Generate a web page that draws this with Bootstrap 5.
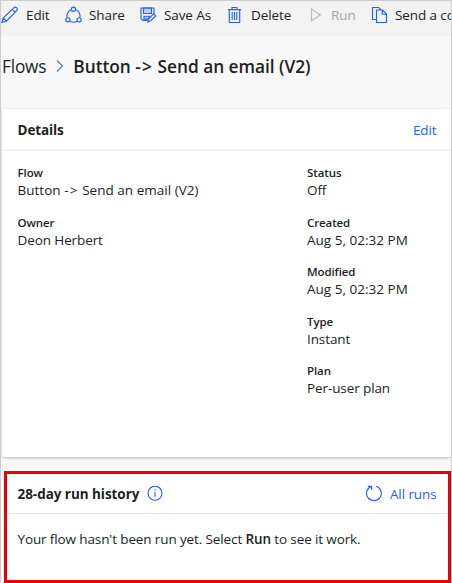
<!DOCTYPE html>
<html lang="en">
<head>
<meta charset="utf-8">
<meta name="viewport" content="width=device-width, initial-scale=1">
<title>Flow details</title>
<link href="https://cdn.jsdelivr.net/npm/bootstrap@5.3.0/dist/css/bootstrap.min.css" rel="stylesheet">
<style>
  body { font-family: "Open Sans", "Noto Sans", sans-serif; font-size: 13.5px; line-height: 18px; color: #201f1e; background: #f8f8f8; letter-spacing: -.1px; }
  .page { height: 583px; border: 1px solid #ccc; border-bottom: 0; }
  svg { fill: none; stroke: #2563eb; stroke-width: 1.15; flex: none; display: block; }
  .toolbar { height: 35px; background: #f3f3f3; padding-bottom: 7px; }
  .cmd { flex: none; color: #201f1e; }
  .cmd span { margin-left: 7px; }
  .cmd.off { color: #a6a4a2; }
  .cmd.off svg { stroke: #bdbbb9; }
  .w-edit { width: 64px; }
  .w-share { width: 75px; }
  .w-save { width: 86px; }
  .w-delete { width: 82px; }
  .w-delete span { margin-left: 8px; }
  .w-run { width: 63px; }
  .crumbs { height: 73px; font-size: 17.3px; line-height: 24px; padding: 19px 0 0 1px; letter-spacing: -.2px; }
  .crumbs svg { stroke: #5b8196; margin: 0 7.5px; }
  .crumb-now { letter-spacing: -.02px; }
  .arrow { letter-spacing: 1.2px; }
  .panel { background: #fff; margin-left: 1px; border-radius: 2px; box-shadow: 0 1px 3px rgba(0,0,0,.25); }
  .details { height: 348px; }
  .panel-head { height: 42px; padding: 1px 14.5px 0 15.5px; border-bottom: 2px solid #f3f2f1; }
  .strong { font-weight: 700; }
  .act { color: #1f5ff0; text-decoration: none; }
  .field-grid { padding: 13px 0 0 15.5px; }
  .left-col { width: 289.5px; }
  .field { height: 49.5px; }
  .field dt { font-size: 11.5px; font-weight: 600; line-height: 17px; }
  .field dd { line-height: 18px; margin: 0; }
  .wide { letter-spacing: .02px; }
  .history { margin: 14px 0 0 3px; height: 112px; border: 3px solid #e8000b; background: #fff; }
  .history .panel-head { height: 40px; padding: 1px 11.5px 0 10.5px; border-bottom: 1px solid #e3e3e3; }
  .history .strong { letter-spacing: -.05px; }
  .note { padding: 16px 0 0 10.5px; letter-spacing: -.12px; }
</style>
</head>
<body>
<div class="page overflow-hidden">
  <nav class="toolbar d-flex align-items-center overflow-hidden text-nowrap">
    <a class="cmd w-edit d-flex align-items-center text-decoration-none" href="#"><svg width="18" height="18" viewBox="0 0 18 18"><path d="M1 16.5 2.2 12 12.8 1.8a2 2 0 0 1 2.9 2.9L5.3 15.2Z M11.3 3.3l3 3 M2.2 12l3.1 3.2"/></svg><span>Edit</span></a>
    <a class="cmd w-share d-flex align-items-center text-decoration-none" href="#"><svg width="17" height="18" viewBox="0 0 17 18"><circle cx="8.5" cy="3.2" r="2.1"/><circle cx="2.9" cy="13.8" r="2.1"/><circle cx="14.1" cy="13.8" r="2.1"/><path d="M6.3 3.8A6.5 6.5 0 0 0 2.1 11.7M10.7 3.8a6.5 6.5 0 0 1 4.2 7.9M5 15.2a7 7 0 0 0 7 0"/></svg><span>Share</span></a>
    <a class="cmd w-save d-flex align-items-center text-decoration-none" href="#"><svg width="17" height="18" viewBox="0 0 17 18"><path fill="#b9d2fb" d="M3.5 2v5.5h8V2ZM4 14v-3.8h5.5L7.5 14Z"/><path d="M7 14.5H3L1 12.6V2h13v6M6 14v-2"/><path fill="#f3f3f3" d="M7.8 15.8l.7-2.8 5.2-5.1 2 2-5.2 5.1Z"/></svg><span>Save As</span></a>
    <a class="cmd w-delete d-flex align-items-center text-decoration-none" href="#"><svg width="17" height="18" viewBox="0 0 17 18"><path d="M2 3.6h13M6 3.6V1.5h5v2.1M3.3 3.6v12.9h10.4V3.6M6.2 6v8M8.5 6v8M10.8 6v8"/></svg><span>Delete</span></a>
    <a class="cmd off w-run d-flex align-items-center text-decoration-none" href="#"><svg width="16" height="16" viewBox="0 0 16 16"><path d="M3.5 2v11.8L12.5 8Z"/></svg><span>Run</span></a>
    <a class="cmd d-flex align-items-center text-decoration-none" href="#"><svg width="17" height="18" viewBox="0 0 17 18"><path d="M5.5 13.5H1.5V1.5h6.2l2.3 2.3M5.5 4h6l4 4v8.5h-10ZM11.3 4v4.2h4.2"/></svg><span>Send a copy</span></a>
  </nav>
  <div class="crumbs d-flex text-nowrap">
    <span>Flows</span>
    <svg width="12" height="22" viewBox="0 0 12 22"><path d="M3 5.5 8.5 11 3 16.5"/></svg>
    <span class="fw-semibold crumb-now">Button <span class="arrow">-&gt;</span> Send an email (V2)</span>
  </div>
  <section class="panel details">
    <header class="panel-head d-flex justify-content-between align-items-center"><span class="strong">Details</span><a class="act" href="#">Edit</a></header>
    <div class="d-flex field-grid">
      <dl class="m-0 left-col">
        <div class="field"><dt>Flow</dt><dd class="wide">Button <span class="arrow">-&gt;</span> Send an email (V2)</dd></div>
        <div class="field"><dt>Owner</dt><dd>Deon Herbert</dd></div>
      </dl>
      <dl class="m-0">
        <div class="field"><dt>Status</dt><dd>Off</dd></div>
        <div class="field"><dt>Created</dt><dd class="wide">Aug 5, 02:32 PM</dd></div>
        <div class="field"><dt>Modified</dt><dd class="wide">Aug 5, 02:32 PM</dd></div>
        <div class="field"><dt>Type</dt><dd>Instant</dd></div>
        <div class="field"><dt>Plan</dt><dd>Per-user plan</dd></div>
      </dl>
    </div>
  </section>
  <section class="history">
    <header class="panel-head d-flex justify-content-between align-items-center">
      <span class="d-flex align-items-center strong">28-day run history<svg class="ms-2" width="16" height="16" viewBox="0 0 16 16"><circle cx="8" cy="7.2" r="7"/><path d="M8 6v4.7M8 3.5v1.2"/></svg></span>
      <a class="act d-flex align-items-center" href="#"><svg class="me-2" width="17" height="18" viewBox="0 0 17 18"><path d="M2.8 1.3H6.6V5.1M6.6 1.3A7.4 7.4 0 1 0 11.3 1.3"/></svg>All runs</a>
    </header>
    <p class="m-0 note">Your flow hasn't been run yet. Select <b class="fw-semibold">Run</b> to see it work.</p>
  </section>
</div>
<script src="https://cdn.jsdelivr.net/npm/bootstrap@5.3.0/dist/js/bootstrap.bundle.min.js"></script>
</body>
</html>
